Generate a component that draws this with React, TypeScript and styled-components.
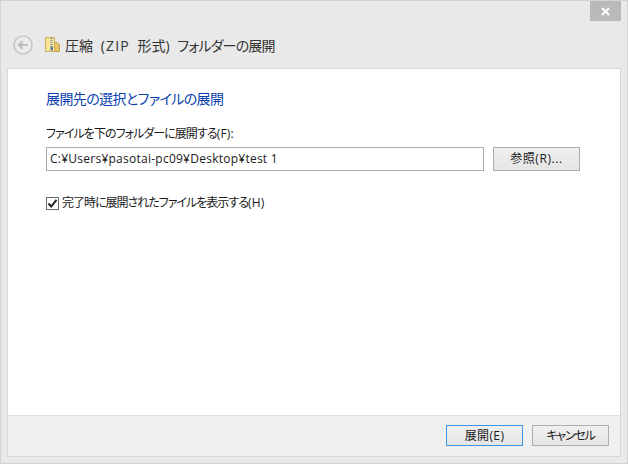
import React from 'react';
import styled, { createGlobalStyle } from 'styled-components';

const GlobalStyle = createGlobalStyle`
  html, body {
    margin: 0;
    padding: 0;
    background: #e9e9e9;
  }
  body {
    font-family: 'Open Sans', 'Noto Sans CJK JP', sans-serif;
    font-feature-settings: 'palt';
  }
`;

const BackIcon = () => (
  <svg width="20" height="20" viewBox="0 0 20 20">
    <circle cx="10" cy="10" r="9" fill="#ececec" stroke="#c8c8c8" strokeWidth="1.7" />
    <path d="M15 10H6M9.6 6.2L5.8 10L9.6 13.8" fill="none" stroke="#bdbdbd" strokeWidth="2" />
  </svg>
);

const ZipFolderIcon = () => (
  <svg width="15" height="15" viewBox="0 0 15 15">
    <path d="M9.5 5.5H12L14.5 8V14.5H9.5Z" fill="#e8c66a" stroke="#bd9c4c" />
    <path d="M0.5 0.5H9.5V14.5H0.5Z" fill="#f8e59c" stroke="#d0ae58" />
    <path d="M6.5 1V10" stroke="#7f8aa0" strokeWidth="2" strokeDasharray="1 1" />
    <rect x="5.5" y="10" width="2.5" height="3.5" fill="#5f7fa6" />
  </svg>
);

const CheckMark = () => (
  <svg width="11" height="11" viewBox="0 0 11 11">
    <path d="M1.5 5.5L4.2 8.5L9.5 1.8" fill="none" stroke="#222" strokeWidth="2" />
  </svg>
);

const App = () => {
  return (
    <React.Fragment>
      <GlobalStyle />
      <Window>
        <TitleBar>
          <CloseButton>
            <svg width="9" height="9" viewBox="0 0 9 9">
              <path d="M1 1L8 8M8 1L1 8" stroke="#fff" strokeWidth="2" />
            </svg>
          </CloseButton>
        </TitleBar>
        <NavBar>
          <BackIcon />
          <NavTitle>
            <ZipFolderIcon />
            <NavText>
              圧縮 <WideRun>(ZIP</WideRun> 形式) <NarrowRun>フォルダーの展開</NarrowRun>
            </NavText>
          </NavTitle>
        </NavBar>
        <Frame>
          <Pane>
            <Heading>展開先の選択とファイルの展開</Heading>
            <FieldLabel>
              ファイルを下のフォルダーに展開する<LatinRun>(F):</LatinRun>
            </FieldLabel>
            <PathRow>
              <PathInput>C:¥Users¥pasotai-pc09¥Desktop¥test 1</PathInput>
              <Button $width={87} $height={24} $spacing={0.6}>
                参照(R)...
              </Button>
            </PathRow>
            <CheckRow>
              <CheckBox>
                <CheckMark />
              </CheckBox>
              <CheckLabel>
                完了時に展開されたファイルを表示する<LatinRun>(H)</LatinRun>
              </CheckLabel>
            </CheckRow>
          </Pane>
          <Footer>
            <Button $width={77} $height={21} $spacing={0.4} $primary>
              展開(E)
            </Button>
            <Button $width={77} $height={21} $spacing={-1.2}>
              キャンセル
            </Button>
          </Footer>
        </Frame>
      </Window>
    </React.Fragment>
  );
};

export default App;

const Window = styled.div`
  box-sizing: border-box;
  display: flex;
  flex-direction: column;
  width: 628px;
  height: 464px;
  padding: 0 6px 6px;
  border: 1px solid #d3d3d3;
  background: #e9e9e9;
  overflow: hidden;
`;

const TitleBar = styled.div`
  display: flex;
  justify-content: flex-end;
  height: 20px;
`;

const CloseButton = styled.div`
  display: flex;
  align-items: center;
  justify-content: center;
  width: 31px;
  height: 20px;
  background: #b9b9b9;
`;

const NavBar = styled.div`
  display: flex;
  align-items: center;
  gap: 12px;
  height: 47px;
  padding-left: 6px;
`;

const NavTitle = styled.div`
  display: flex;
  align-items: center;
  gap: 5px;
`;

const NavText = styled.div`
  font-size: 14px;
  word-spacing: 4px;
  color: #333333;
  white-space: nowrap;
`;

const WideRun = styled.span`
  letter-spacing: 1.2px;
`;

const NarrowRun = styled.span`
  letter-spacing: -0.8px;
`;

const LatinRun = styled.span`
  letter-spacing: 0.2px;
`;

const Frame = styled.div`
  flex: 1;
  display: flex;
  flex-direction: column;
  border: 1px solid #d9d9d9;
  min-height: 0;
`;

const Pane = styled.div`
  flex: 1;
  padding: 20px 0 0 38px;
  background: #ffffff;
`;

const Heading = styled.div`
  font-size: 14px;
  line-height: 20px;
  letter-spacing: -0.6px;
  color: #0a3fb0;
`;

const FieldLabel = styled.div`
  margin-top: 17px;
  font-size: 12px;
  line-height: 16px;
  letter-spacing: -0.95px;
  color: #1a1a1a;
`;

const PathRow = styled.div`
  display: flex;
  align-items: center;
  gap: 9px;
  margin-top: 5px;
`;

const PathInput = styled.div`
  box-sizing: border-box;
  width: 438px;
  height: 24px;
  padding: 0 3px;
  border: 1px solid #acacac;
  font-size: 12px;
  line-height: 22px;
  letter-spacing: 0.25px;
  color: #1a1a1a;
`;

const Button = styled.div<{ $width: number; $height: number; $spacing: number; $primary?: boolean }>`
  box-sizing: border-box;
  width: ${(p) => p.$width}px;
  height: ${(p) => p.$height}px;
  border: 1px solid ${(p) => (p.$primary ? '#3c94e8' : '#adadad')};
  background: linear-gradient(#f0f0f0, #e5e5e5);
  font-size: 12px;
  line-height: ${(p) => p.$height - 2}px;
  letter-spacing: ${(p) => p.$spacing}px;
  text-align: center;
  color: #1a1a1a;
`;

const CheckRow = styled.div`
  display: flex;
  align-items: center;
  gap: 3px;
  margin-top: 24px;
`;

const CheckBox = styled.div`
  box-sizing: border-box;
  display: flex;
  align-items: center;
  justify-content: center;
  width: 13px;
  height: 13px;
  border: 1px solid #6a6a6a;
  background: #fff;
`;

const CheckLabel = styled.div`
  font-size: 12px;
  line-height: 16px;
  letter-spacing: -1px;
  color: #1a1a1a;
`;

const Footer = styled.div`
  box-sizing: border-box;
  display: flex;
  justify-content: flex-end;
  align-items: flex-start;
  gap: 9px;
  height: 41px;
  padding: 9px 11px 0 0;
  border-top: 1px solid #dfdfdf;
  background: #f0f0f0;
`;
